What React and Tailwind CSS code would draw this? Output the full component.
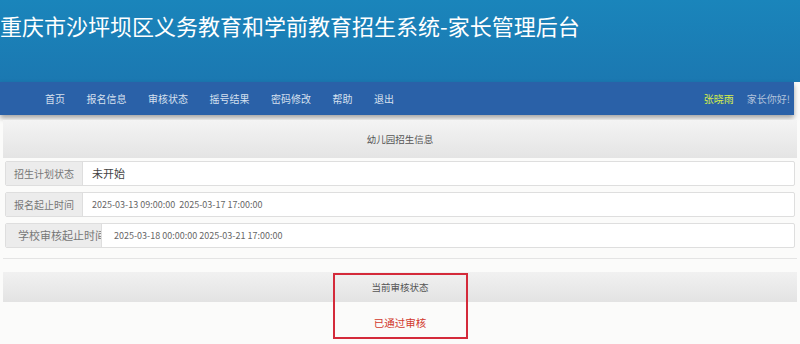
import React from 'react';

const navItems = ['首页', '报名信息', '审核状态', '摇号结果', '密码修改', '帮助', '退出'];

const rows = [
    { label: '招生计划状态', value: '未开始', labelCls: 'w-[77px] text-[10px] pl-[8px]', valueCls: 'text-[11px] text-[#444] pl-[9px]' },
    { label: '报名起止时间', value: '2025-03-13 09:00:00  2025-03-17 17:00:00', labelCls: 'w-[77px] text-[10px] pl-[8px]', valueCls: 'text-[9px] text-[#666] pl-[9px]' },
    { label: '学校审核起止时间', value: '2025-03-18 00:00:00 2025-03-21 17:00:00', labelCls: 'w-[96px] text-[11px] pl-[12px]', valueCls: 'text-[9px] text-[#666] pl-[12px]' },
];

export default function App() {
    return (
        <div className="w-[800px] h-[344px] overflow-hidden bg-[#fbfbfa] font-['Noto_Sans_CJK_SC','Noto_Sans',sans-serif]">
            {/* header */}
            <div className="h-[82px] bg-gradient-to-b from-[#1a85bb] to-[#1b78b1] pt-[8px]">
                <h1 className="text-white text-[22px] leading-[34px] whitespace-nowrap">
                    重庆市沙坪坝区义务教育和学前教育招生系统-家长管理后台
                </h1>
            </div>

            {/* nav */}
            <div className="h-[33px] mr-[6px] bg-[#2a61a8] flex items-center pl-[45px] pr-[4px] shadow-[0_3px_5px_rgba(0,0,0,0.35)]">
                <div className="flex gap-[21.5px] text-[10px] text-[#d6e0ef]">
                    {navItems.map((n) => (
                        <span key={n}>{n}</span>
                    ))}
                </div>
                <div className="ml-auto flex gap-[13px] text-[10px]">
                    <span className="text-[#d8f04a]">张晓雨</span>
                    <span className="text-[#b3c3db]">家长你好!</span>
                </div>
            </div>

            {/* enrolment info */}
            <div className="mx-[3px] mt-[5px]">
                <div className="h-[38px] bg-gradient-to-b from-[#f4f4f4] to-[#e4e4e4] flex items-center justify-center text-[9.5px] text-[#555]">
                    幼儿园招生信息
                </div>
                <div className="flex flex-col gap-[6px] pt-[3px] px-[2px]">
                    {rows.map((r) => (
                        <div key={r.label} className="h-[25px] flex border border-[#dedede] bg-white rounded-[2px] overflow-hidden">
                            <div className={`${r.labelCls} shrink-0 bg-[#ececec] border-r border-[#dedede] flex items-center text-[#777] whitespace-nowrap overflow-hidden`}>
                                {r.label}
                            </div>
                            <div className={`flex items-center whitespace-pre ${r.valueCls}`}>{r.value}</div>
                        </div>
                    ))}
                </div>
            </div>

            {/* current status */}
            <div className="mx-[3px] mt-[10px] border-t border-[#e4e4e4]">
                <div className="h-[13px]" />
                <div className="relative">
                    <div className="h-[30px] bg-gradient-to-b from-[#f1f1f1] to-[#e3e3e3] flex items-center justify-center text-[9.5px] text-[#555]">
                        当前审核状态
                    </div>
                    <div className="h-[42px] flex items-center justify-center text-[10.5px] text-[#d2382c]">
                        已通过审核
                    </div>
                    <div className="absolute left-[330px] top-[1px] w-[135px] h-[66px] border-2 border-[#d42a3a]" />
                </div>
            </div>
        </div>
    );
}
